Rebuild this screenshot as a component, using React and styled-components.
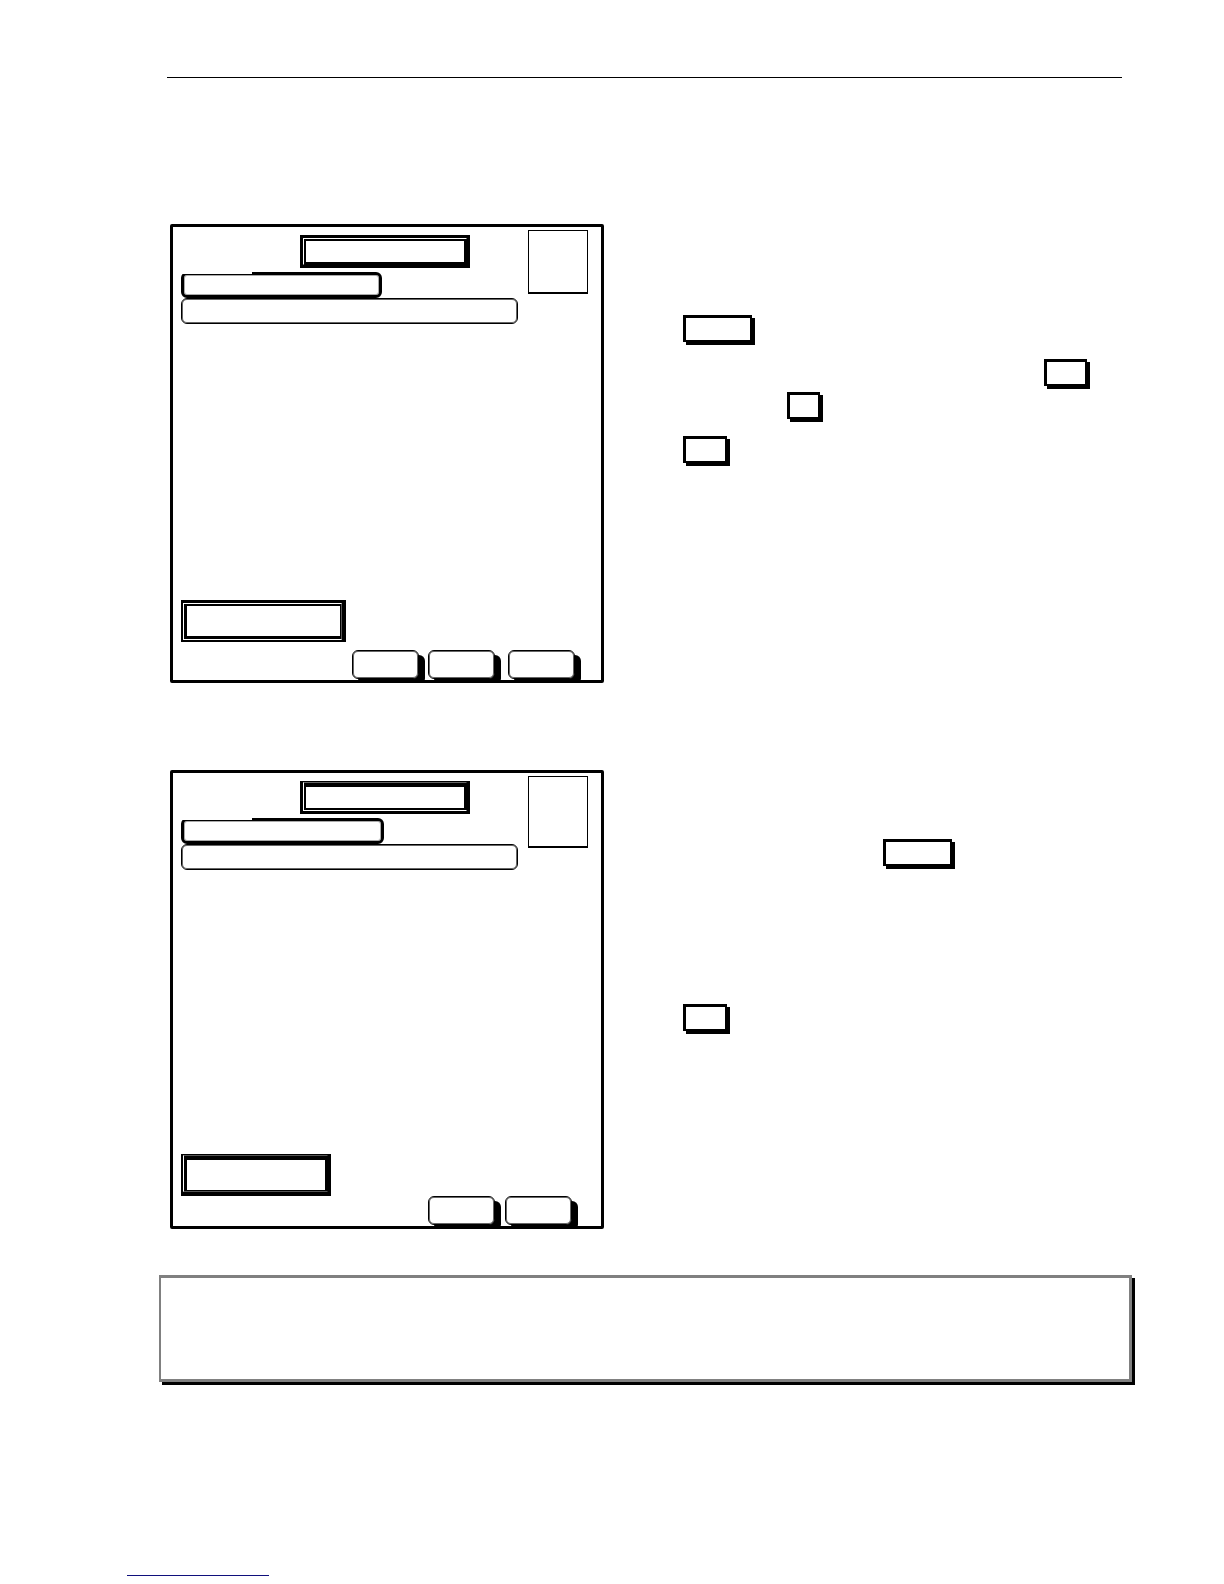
import React from 'react';
import styled, { createGlobalStyle } from 'styled-components';

const GlobalStyle = createGlobalStyle`
  body {
    margin: 0;
    background: #fff;
    color: #000;
    font-family: 'Liberation Sans', Arial, sans-serif;
  }

  *,
  *:before,
  *:after {
    box-sizing: border-box;
  }
`;

const StyledPage = styled.div`
  display: flex;
  flex-direction: column;
  padding: 77px 0 8px;
`;

const StyledRule = styled.hr`
  width: auto;
  height: 1px;
  margin: 0 102px 146px 167px;
  border: 0;
  background: #000;
`;

const StyledMain = styled.main`
  display: grid;
  grid-gap: 87px;
  margin: 0 92px 46px 170px;
`;

const StyledSection = styled.section`
  display: grid;
  grid-template-columns: minmax(0, 434px) 1fr;
  grid-gap: 79px;
`;

const StyledPanel = styled.div`
  display: flex;
  flex-direction: column;
  min-height: 459px;
  padding: 0 0 1px 8px;
  border: 3px solid #000;
  border-radius: 2px;
  overflow: hidden;
`;

const StyledPanelHeader = styled.header`
  display: flex;
  align-items: flex-start;
  gap: 10px;
`;

const StyledHeaderFields = styled.div`
  width: 337px;
  padding-top: 8px;
`;

// three nested borders: outer edge, one pixel seam, inner edge
const StyledFrame = styled.div`
  width: ${({ $width }) => $width}px;
  height: ${({ $height }) => $height}px;
  border: solid #000;
  border-width: ${({ $outer }) => $outer};

  .seam {
    height: 100%;
    border: 1px solid;
    border-color: ${({ $seam }) => $seam};
  }

  .core {
    height: 100%;
    border: solid #000;
    border-width: ${({ $inner }) => $inner};
  }
`;

const StyledTitle = styled(StyledFrame)`
  margin: 0 0 4px 119px;
`;

const StyledStatus = styled(StyledFrame)`
  margin-top: auto;
  margin-bottom: ${({ $space }) => $space}px;
`;

const StyledTab = styled.div`
  position: relative;
  width: ${({ $width }) => $width}px;
  height: 26px;
  border: 3px solid #000;
  border-radius: 6px;
  box-shadow: inset 0 0 0 1px #aaa;

  /* the top edge is thinner on the left */
  &:before {
    content: '';
    position: absolute;
    top: -3px;
    left: -3px;
    width: 71px;
    height: 2px;
    background: #fff;
  }
`;

const StyledField = styled.div`
  height: 26px;
  border: 1px solid #000;
  border-radius: 6px;
  box-shadow: inset 0 0 0 1px #666;
`;

const StyledIconBox = styled.div`
  width: 60px;
  height: ${({ $height }) => $height}px;
  margin-top: 3px;
  border: 1px solid #000;
  border-bottom-width: 2px;
`;

const StyledSoftkeys = styled.div`
  display: flex;
`;

const StyledSoftkey = styled.button`
  width: 67px;
  height: 29px;
  margin: 0 0 0 ${({ $space }) => $space}px;
  padding: 0;
  border: 1px solid #000;
  border-radius: 6px;
  background: #fff;
  box-shadow: inset 0 0 0 1px #666, 6px 5px 0 #000;
`;

const StyledSteps = styled.div`
  display: flex;
  flex-direction: column;
  gap: ${({ $gap }) => $gap}px;
  padding-top: ${({ $top }) => $top}px;
`;

const StyledStep = styled.div`
  display: flex;
  flex-direction: column;
  gap: 6px;
`;

const StyledKey = styled.button`
  width: ${({ $width }) => $width}px;
  height: 27px;
  margin: 0 0 0 ${({ $indent }) => $indent || 0}px;
  padding: 0;
  border: solid #000;
  border-width: 3px 2px 2px 3px;
  border-radius: 0;
  background: #fff;
  box-shadow: 3px 3px 0 #000;
`;

const StyledNote = styled.aside`
  min-height: 107px;
  margin: 0 92px 193px 159px;
  border: 3px solid #808080;
  border-left-width: 2px;
  box-shadow: 3px 3px 0 #000;
`;

const StyledFooterLine = styled.div`
  width: 142px;
  height: 1px;
  margin-left: 127px;
  background: #10107c;
`;

const screens = [
  {
    title: { $outer: '3px', $seam: '#fff #000 #000 #fff', $inner: '2px' },
    tabWidth: 201,
    iconHeight: 64,
    status: {
      $width: 165,
      $space: 8,
      $outer: '3px 4px 2px 2px',
      $seam: '#fff #555 #fff #fff',
      $inner: '2px 1px 3px 3px',
    },
    softkeys: [171, 9, 13],
    steps: {
      top: 91,
      gap: 17,
      items: [
        [{ width: 69 }],
        [
          { width: 43, indent: 361 },
          { width: 33, indent: 104 },
        ],
        [{ width: 44 }],
      ],
    },
  },
  {
    title: { $outer: '1px 3px 3px', $seam: '#666 #000 #fff #fff', $inner: '4px 2px 2px' },
    tabWidth: 203,
    iconHeight: 72,
    status: {
      $width: 150,
      $space: 0,
      $outer: '1px 3px 4px 2px',
      $seam: '#555 #000 #555 #fff',
      $inner: '4px 2px 1px 3px',
    },
    softkeys: [247, 10],
    steps: {
      top: 69,
      gap: 138,
      items: [[{ width: 69, indent: 200 }], [{ width: 44 }]],
    },
  },
];

const FrameEdges = () => (
  <div className="seam">
    <div className="core" />
  </div>
);

const Panel = ({ title, tabWidth, iconHeight, status, softkeys }) => (
  <StyledPanel>
    <StyledPanelHeader>
      <StyledHeaderFields>
        <StyledTitle $width={170} $height={33} {...title}>
          <FrameEdges />
        </StyledTitle>
        <StyledTab $width={tabWidth} />
        <StyledField />
      </StyledHeaderFields>
      <StyledIconBox $height={iconHeight} />
    </StyledPanelHeader>

    <StyledStatus $height={42} {...status}>
      <FrameEdges />
    </StyledStatus>

    <StyledSoftkeys>
      {softkeys.map((space, i) => (
        <StyledSoftkey key={i} type="button" aria-label={`Softkey ${i + 1}`} $space={space} />
      ))}
    </StyledSoftkeys>
  </StyledPanel>
);

const Steps = ({ top, gap, items }) => (
  <StyledSteps $top={top} $gap={gap}>
    {items.map((keys, i) => (
      <StyledStep key={i}>
        {keys.map(({ width, indent }, j) => (
          <StyledKey
            key={j}
            type="button"
            aria-label={`Step ${i + 1} key ${j + 1}`}
            $width={width}
            $indent={indent}
          />
        ))}
      </StyledStep>
    ))}
  </StyledSteps>
);

const App = () => (
  <StyledPage>
    <GlobalStyle />
    <StyledRule />

    <StyledMain>
      {screens.map(({ steps, ...panel }, i) => (
        <StyledSection key={i}>
          <Panel {...panel} />
          <Steps {...steps} />
        </StyledSection>
      ))}
    </StyledMain>

    <StyledNote />
    <StyledFooterLine />
  </StyledPage>
);

export default App;
